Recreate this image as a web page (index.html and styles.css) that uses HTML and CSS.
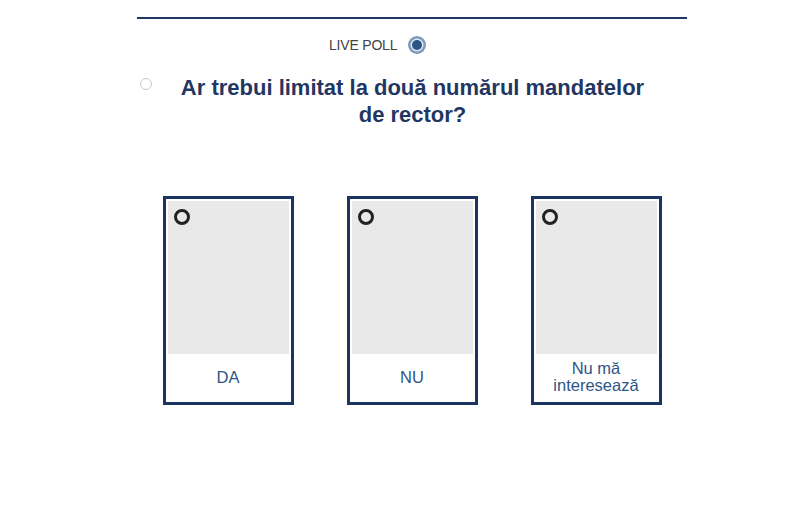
FILE: index.html
```html
<!DOCTYPE html>
<html lang="ro">
<head>
<meta charset="utf-8">
<title>Live Poll</title>
<link rel="stylesheet" href="styles.css">
</head>
<body>
<div class="poll">
  <div class="rule"></div>
  <div class="live">
    <span class="live-label">LIVE POLL</span>
    <span class="live-dot"><span class="live-core"></span></span>
  </div>
  <div class="question-row">
    <span class="q-radio"></span>
    <h1 class="question">Ar trebui limitat la două numărul mandatelor de rector?</h1>
  </div>
  <div class="options">
    <div class="card">
      <div class="card-img"><span class="card-radio"></span></div>
      <div class="card-label">DA</div>
    </div>
    <div class="card">
      <div class="card-img"><span class="card-radio"></span></div>
      <div class="card-label">NU</div>
    </div>
    <div class="card">
      <div class="card-img"><span class="card-radio"></span></div>
      <div class="card-label">Nu mă interesează</div>
    </div>
  </div>
</div>
</body>
</html>
```
FILE: styles.css
```css
html, body {
  margin: 0;
  padding: 0;
  background: #ffffff;
  font-family: "Liberation Sans", Arial, sans-serif;
}

.poll {
  width: 550px;
  margin-left: 137px;
  padding-top: 17px;
}

.rule {
  height: 2px;
  background: #1f3762;
}

.live {
  display: flex;
  align-items: center;
  padding-left: 192px;
  margin-top: 16px;
  height: 20px;
}

.live-label {
  font-size: 14px;
  color: #444444;
  letter-spacing: -0.2px;
}

.live-dot {
  width: 18px;
  height: 18px;
  margin-left: 11px;
  border-radius: 50%;
  background: #7d9bbd;
  display: flex;
  align-items: center;
  justify-content: center;
}

.live-core {
  width: 10px;
  height: 10px;
  border-radius: 50%;
  background: #2a5585;
  box-shadow: 0 0 0 1.5px #dfe8f2;
}

.question-row {
  display: flex;
  align-items: flex-start;
  margin-top: 19px;
}

.q-radio {
  flex: none;
  width: 10px;
  height: 10px;
  margin: 4px 0 0 3px;
  border: 1px solid #c9c9c9;
  border-radius: 50%;
}

.question {
  flex: 1;
  margin: 0;
  padding: 0 32px 0 18px;
  text-align: center;
  font-size: 22px;
  line-height: 27px;
  font-weight: bold;
  color: #1f3762;
}

.options {
  display: flex;
  justify-content: center;
  gap: 53px;
  margin-top: 68px;
}

.card {
  width: 121px;
  height: 199px;
  border: 3px solid #1c3461;
  padding: 2px;
  display: flex;
  flex-direction: column;
  box-sizing: content-box;
}

.card-img {
  height: 153px;
  background: #e9e9e9;
  padding: 8px 0 0 6px;
  box-sizing: border-box;
}

.card-radio {
  display: block;
  width: 10px;
  height: 10px;
  border: 3px solid #222222;
  border-radius: 50%;
}

.card-label {
  flex: 1;
  display: flex;
  align-items: center;
  justify-content: center;
  text-align: center;
  font-size: 16.5px;
  line-height: 17px;
  color: #2d5686;
  padding: 0 14px;
}
```
